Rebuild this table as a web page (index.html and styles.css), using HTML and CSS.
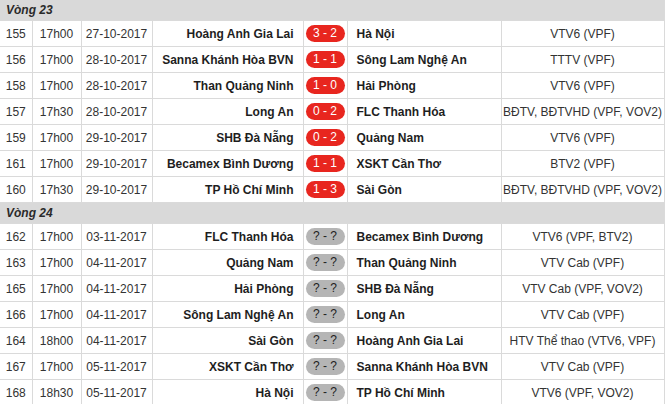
FILE: index.html
```html
<!DOCTYPE html>
<html lang="vi">
<head>
<meta charset="utf-8">
<link rel="stylesheet" href="styles.css">
</head>
<body>
<table class="fixtures">
  <colgroup>
    <col class="c-no"><col class="c-time"><col class="c-date"><col class="c-home"><col class="c-score"><col class="c-away"><col class="c-tv">
  </colgroup>
  <tbody>
    <tr class="round"><td colspan="7">Vòng 23</td></tr>
    <tr><td>155</td><td>17h00</td><td>27-10-2017</td><td class="home">Hoàng Anh Gia Lai</td><td class="score"><span class="badge done">3 - 2</span></td><td class="away">Hà Nội</td><td>VTV6 (VPF)</td></tr>
    <tr><td>156</td><td>17h00</td><td>28-10-2017</td><td class="home">Sanna Khánh Hòa BVN</td><td class="score"><span class="badge done">1 - 1</span></td><td class="away">Sông Lam Nghệ An</td><td>TTTV (VPF)</td></tr>
    <tr><td>158</td><td>17h00</td><td>28-10-2017</td><td class="home">Than Quảng Ninh</td><td class="score"><span class="badge done">1 - 0</span></td><td class="away">Hải Phòng</td><td>VTV6 (VPF)</td></tr>
    <tr><td>157</td><td>17h30</td><td>28-10-2017</td><td class="home">Long An</td><td class="score"><span class="badge done">0 - 2</span></td><td class="away">FLC Thanh Hóa</td><td>BĐTV, BĐTVHD (VPF, VOV2)</td></tr>
    <tr><td>159</td><td>17h00</td><td>29-10-2017</td><td class="home">SHB Đà Nẵng</td><td class="score"><span class="badge done">0 - 2</span></td><td class="away">Quảng Nam</td><td>VTV6 (VPF)</td></tr>
    <tr><td>161</td><td>17h00</td><td>29-10-2017</td><td class="home">Becamex Bình Dương</td><td class="score"><span class="badge done">1 - 1</span></td><td class="away">XSKT Cần Thơ</td><td>BTV2 (VPF)</td></tr>
    <tr><td>160</td><td>17h30</td><td>29-10-2017</td><td class="home">TP Hồ Chí Minh</td><td class="score"><span class="badge done">1 - 3</span></td><td class="away">Sài Gòn</td><td>BĐTV, BĐTVHD (VPF, VOV2)</td></tr>
    <tr class="round"><td colspan="7">Vòng 24</td></tr>
    <tr><td>162</td><td>17h00</td><td>03-11-2017</td><td class="home">FLC Thanh Hóa</td><td class="score"><span class="badge todo">? - ?</span></td><td class="away">Becamex Bình Dương</td><td>VTV6 (VPF, BTV2)</td></tr>
    <tr><td>163</td><td>17h00</td><td>04-11-2017</td><td class="home">Quảng Nam</td><td class="score"><span class="badge todo">? - ?</span></td><td class="away">Than Quảng Ninh</td><td>VTV Cab (VPF)</td></tr>
    <tr><td>165</td><td>17h00</td><td>04-11-2017</td><td class="home">Hải Phòng</td><td class="score"><span class="badge todo">? - ?</span></td><td class="away">SHB Đà Nẵng</td><td>VTV Cab (VPF, VOV2)</td></tr>
    <tr><td>166</td><td>17h00</td><td>04-11-2017</td><td class="home">Sông Lam Nghệ An</td><td class="score"><span class="badge todo">? - ?</span></td><td class="away">Long An</td><td>VTV Cab (VPF)</td></tr>
    <tr><td>164</td><td>18h00</td><td>04-11-2017</td><td class="home">Sài Gòn</td><td class="score"><span class="badge todo">? - ?</span></td><td class="away">Hoàng Anh Gia Lai</td><td>HTV Thể thao (VTV6, VPF)</td></tr>
    <tr><td>167</td><td>17h00</td><td>05-11-2017</td><td class="home">XSKT Cần Thơ</td><td class="score"><span class="badge todo">? - ?</span></td><td class="away">Sanna Khánh Hòa BVN</td><td>VTV Cab (VPF)</td></tr>
    <tr><td>168</td><td>18h30</td><td>05-11-2017</td><td class="home">Hà Nội</td><td class="score"><span class="badge todo">? - ?</span></td><td class="away">TP Hồ Chí Minh</td><td>VTV6 (VPF, VOV2)</td></tr>
  </tbody>
</table>
</body>
</html>
```

FILE: styles.css
```css
html, body {
  margin: 0;
  padding: 0;
  background: #ffffff;
}

.fixtures {
  border-collapse: collapse;
  table-layout: fixed;
  width: 664px;
  font-family: "Liberation Sans", Arial, sans-serif;
  font-size: 12px;
  color: #333333;
}

.c-no { width: 32px; }
.c-time { width: 49px; }
.c-date { width: 71px; }
.c-home { width: 151px; }
.c-score { width: 44px; }
.c-away { width: 154px; }
.c-tv { width: 163px; }

.fixtures td {
  border: 1px solid #dadada;
  height: 25px;
  padding: 0;
  text-align: center;
  white-space: nowrap;
  overflow: hidden;
}

.fixtures tr:first-child td {
  border-top: none;
}

.fixtures td:first-child {
  border-left: none;
}

.fixtures .round td {
  background: #d9d9d9;
  height: 20px;
  text-align: left;
  padding-left: 6px;
  font-weight: bold;
  font-style: italic;
  color: #2a2a2a;
}

.fixtures .home {
  text-align: right;
  padding-right: 9px;
  font-weight: bold;
  color: #1e1e1e;
}

.fixtures .away {
  text-align: left;
  padding-left: 9px;
  font-weight: bold;
  color: #1e1e1e;
}

.badge {
  display: inline-block;
  width: 39px;
  height: 17px;
  line-height: 17px;
  border-radius: 9px;
  text-align: center;
  vertical-align: middle;
}

.badge.done {
  background: #e8261f;
  color: #ffffff;
}

.badge.todo {
  background: #b5b5b5;
  color: #222222;
}
```
